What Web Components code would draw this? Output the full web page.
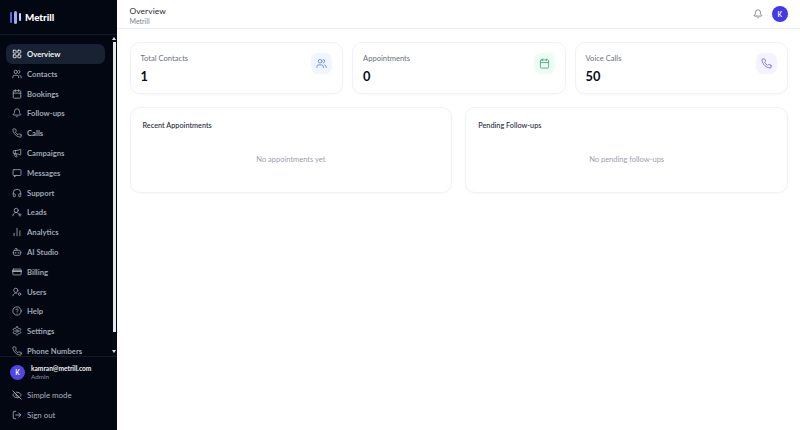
<!DOCTYPE html>
<html><head><meta charset="utf-8">
<style>
html,body{margin:0;height:100%;background:#fff;overflow:hidden}
body{font-family:Lato,"Liberation Sans",sans-serif}
</style></head><body>
<app-shell>
  <side-bar slot="side"></side-bar>
  <top-bar slot="top" heading="Overview" sub="Metrill"></top-bar>
  <stat-row slot="main">
    <stat-card label="Total Contacts" value="1" icon="users" tint="#eff6ff" ink="#5b8def"></stat-card>
    <stat-card label="Appointments" value="0" icon="calendar" tint="#ecfdf5" ink="#5aa888"></stat-card>
    <stat-card label="Voice Calls" value="50" icon="phone" tint="#f5f3ff" ink="#8b6cf0"></stat-card>
  </stat-row>
  <panel-row slot="main">
    <info-panel heading="Recent Appointments" empty="No appointments yet"></info-panel>
    <info-panel heading="Pending Follow-ups" empty="No pending follow-ups"></info-panel>
  </panel-row>
</app-shell>
<script>
const ICONS={
grid:'<rect x="3" y="3" width="7" height="7" rx="1"/><rect x="14" y="3" width="7" height="7" rx="1"/><rect x="14" y="14" width="7" height="7" rx="1"/><rect x="3" y="14" width="7" height="7" rx="1"/>',
users:'<path d="M16 21v-2a4 4 0 0 0-4-4H6a4 4 0 0 0-4 4v2"/><circle cx="9" cy="7" r="4"/><path d="M22 21v-2a4 4 0 0 0-3-3.87"/><path d="M16 3.13a4 4 0 0 1 0 7.75"/>',
calendar:'<path d="M8 2v4"/><path d="M16 2v4"/><rect x="3" y="4" width="18" height="18" rx="2"/><path d="M3 10h18"/>',
bell:'<path d="M10.27 21a2 2 0 0 0 3.46 0"/><path d="M3.26 15.33A1 1 0 0 0 4 17h16a1 1 0 0 0 .74-1.67C19.41 13.96 18 12.5 18 8A6 6 0 0 0 6 8c0 4.5-1.41 5.96-2.74 7.33"/>',
phone:'<path d="M22 16.92v3a2 2 0 0 1-2.18 2 19.79 19.79 0 0 1-8.63-3.07 19.5 19.5 0 0 1-6-6 19.79 19.79 0 0 1-3.07-8.67A2 2 0 0 1 4.11 2h3a2 2 0 0 1 2 1.72c.13.96.36 1.9.7 2.81a2 2 0 0 1-.45 2.11L8.09 9.91a16 16 0 0 0 6 6l1.27-1.27a2 2 0 0 1 2.11-.45c.91.34 1.85.57 2.81.7A2 2 0 0 1 22 16.92z"/>',
megaphone:'<path d="M11 6a13 13 0 0 0 8.4-2.8A1 1 0 0 1 21 4v12a1 1 0 0 1-1.6.8A13 13 0 0 0 11 14H5a2 2 0 0 1-2-2V8a2 2 0 0 1 2-2z"/><path d="M6 14a12 12 0 0 0 2.4 7.2 2 2 0 0 0 3.2-2.4A8 8 0 0 1 10 14"/><path d="M8 6v8"/>',
message:'<rect x="2.5" y="4" width="19" height="14" rx="2"/><path d="M6 18v3.5l4-3.5"/>',
headset:'<path d="M3 14h3a2 2 0 0 1 2 2v3a2 2 0 0 1-2 2H5a2 2 0 0 1-2-2v-7a9 9 0 0 1 18 0v7a2 2 0 0 1-2 2h-1a2 2 0 0 1-2-2v-3a2 2 0 0 1 2-2h3"/>',
userplus:'<path d="M2 21a8 8 0 0 1 13.29-6"/><circle cx="10" cy="8" r="5"/><path d="M19 16v6"/><path d="M22 19h-6"/>',
chart:'<path d="M5 21v-6"/><path d="M12 21V3"/><path d="M19 21V9"/>',
bot:'<path d="M12 8V4H8"/><rect x="4" y="8" width="16" height="12" rx="2"/><path d="M2 14h2"/><path d="M20 14h2"/><path d="M15 13v2"/><path d="M9 13v2"/>',
card:'<rect x="2" y="5" width="20" height="14" rx="2"/><path d="M2 10h20" stroke-width="4"/>',
usercog:'<circle cx="9" cy="8" r="5"/><path d="M2 21a7.5 7.5 0 0 1 9.5-6.5"/><circle cx="18" cy="17" r="3"/>',
help:'<circle cx="12" cy="12" r="10"/><path d="M9.09 9a3 3 0 0 1 5.83 1c0 2-3 3-3 3"/><path d="M12 17h.01"/>',
cog:'<path d="M12.22 2h-.44a2 2 0 0 0-2 2v.18a2 2 0 0 1-1 1.73l-.43.25a2 2 0 0 1-2 0l-.15-.08a2 2 0 0 0-2.73.73l-.22.38a2 2 0 0 0 .73 2.73l.15.1a2 2 0 0 1 1 1.72v.51a2 2 0 0 1-1 1.74l-.15.09a2 2 0 0 0-.73 2.73l.22.38a2 2 0 0 0 2.73.73l.15-.08a2 2 0 0 1 2 0l.43.25a2 2 0 0 1 1 1.73V20a2 2 0 0 0 2 2h.44a2 2 0 0 0 2-2v-.18a2 2 0 0 1 1-1.73l.43-.25a2 2 0 0 1 2 0l.15.08a2 2 0 0 0 2.73-.73l.22-.39a2 2 0 0 0-.73-2.73l-.15-.08a2 2 0 0 1-1-1.74v-.5a2 2 0 0 1 1-1.74l.15-.09a2 2 0 0 0 .73-2.73l-.22-.38a2 2 0 0 0-2.73-.73l-.15.08a2 2 0 0 1-2 0l-.43-.25a2 2 0 0 1-1-1.73V4a2 2 0 0 0-2-2z"/><circle cx="12" cy="12" r="3"/>',
eyeoff:'<path d="M10.73 5.08A11 11 0 0 1 21.9 11.6a1 1 0 0 1 0 .7 11 11 0 0 1-1.44 2.49"/><path d="M14.08 14.16a3 3 0 0 1-4.24-4.24"/><path d="M17.48 17.5A11 11 0 0 1 2.1 12.35a1 1 0 0 1 0-.7 11 11 0 0 1 4.45-5.14"/><path d="m2 2 20 20"/>',
logout:'<path d="m16 17 5-5-5-5"/><path d="M21 12H9"/><path d="M9 21H5a2 2 0 0 1-2-2V5a2 2 0 0 1 2-2h4"/>'
};
const svg=(n,s,w=2)=>`<svg xmlns="http://www.w3.org/2000/svg" width="${s}" height="${s}" viewBox="0 0 24 24" fill="none" stroke="currentColor" stroke-width="${w}" stroke-linecap="round" stroke-linejoin="round">${ICONS[n]}</svg>`;
function def(name,fn){customElements.define(name,class extends HTMLElement{connectedCallback(){if(!this.shadowRoot){this.attachShadow({mode:'open'}).innerHTML=fn(this)}}})}

def('app-shell',()=>`<style>
:host{display:flex;width:800px;height:430px;overflow:hidden}
.r{flex:1;min-width:0;display:flex;flex-direction:column}
main{display:flex;flex-direction:column;gap:13px;padding:13px 12px 0 12.5px}
</style><slot name="side"></slot><div class="r"><slot name="top"></slot><main><slot name="main"></slot></main></div>`);

def('nav-item',e=>`<style>
:host{display:flex;align-items:center;gap:5px;height:19.8px;padding-left:6px;font-size:7.7px;font-weight:700;color:#9ea6b3;border-radius:6.5px;flex:none}
:host([active]){color:#eef1f6;background:#192233}
:host([light]){font-weight:400;font-size:7.9px;color:#aab1bd}
svg{flex:none}
</style>${svg(e.getAttribute('icon'),10)}<span>${e.getAttribute('label')}</span>`);

def('brand-logo',()=>`<style>
:host{display:flex;align-items:center;gap:4px;height:35px;padding-left:10px;box-sizing:border-box;border-bottom:1px solid #131a28;color:#fff;font-size:9.8px;font-weight:900}
i{display:block;border-radius:2px}
.m{display:flex;align-items:center;gap:1.6px}
</style><span class="m"><i style="width:2.4px;height:11px;background:#5f63e8"></i><i style="width:3px;height:13px;background:#a5a6f6"></i><i style="width:2.4px;height:8px;background:#c7d2fe"></i></span><span>Metrill</span>`);

def('fake-scroll',()=>`<style>
:host{position:absolute;top:0;right:1px;bottom:0;width:4px;background:#070b14}
.t{position:absolute;top:6.5px;left:.5px;right:0;height:290.5px;background:#e6e7ea}
.a,.b{position:absolute;left:.2px;width:0;height:0;border-left:2px solid transparent;border-right:2px solid transparent}
.a{top:2px;border-bottom:3px solid #dfe1e5}.b{bottom:3px;border-top:3px solid #dfe1e5}
</style><div class="t"></div><div class="a"></div><div class="b"></div>`);

def('side-bar',()=>`<style>
:host{display:flex;flex-direction:column;width:117px;flex:none;height:430px;background:#030712;box-sizing:border-box}
.nav{position:relative;height:321px;overflow:hidden;flex:none}
.list{display:flex;flex-direction:column;padding:9.2px 12px 0 6px}
.foot{flex:1;border-top:1px solid #131a28;display:flex;flex-direction:column}
.user{display:flex;align-items:center;gap:6px;padding:6px 0 4px 10px;height:19px}
.av{width:15px;height:15px;border-radius:50%;background:#4f46e5;color:#fff;font-size:6.5px;font-weight:700;display:flex;align-items:center;justify-content:center;flex:none}
.mail{font-size:6.6px;font-weight:700;color:#eef1f6;line-height:9px}
.role{font-size:6.4px;color:#8a93a3;line-height:8px}
</style>
<brand-logo></brand-logo>
<div class="nav"><div class="list">
<nav-item active icon="grid" label="Overview"></nav-item>
<nav-item icon="users" label="Contacts"></nav-item>
<nav-item icon="calendar" label="Bookings"></nav-item>
<nav-item icon="bell" label="Follow-ups"></nav-item>
<nav-item icon="phone" label="Calls"></nav-item>
<nav-item icon="megaphone" label="Campaigns"></nav-item>
<nav-item icon="message" label="Messages"></nav-item>
<nav-item icon="headset" label="Support"></nav-item>
<nav-item icon="userplus" label="Leads"></nav-item>
<nav-item icon="chart" label="Analytics"></nav-item>
<nav-item icon="bot" label="AI Studio"></nav-item>
<nav-item icon="card" label="Billing"></nav-item>
<nav-item icon="usercog" label="Users"></nav-item>
<nav-item icon="help" label="Help"></nav-item>
<nav-item icon="cog" label="Settings"></nav-item>
<nav-item icon="phone" label="Phone Numbers"></nav-item>
</div><fake-scroll></fake-scroll></div>
<div class="foot">
<div class="user"><div class="av">K</div><div><div class="mail">kamran@metrill.com</div><div class="role">Admin</div></div></div>
<nav-item light style="margin-left:6px;margin-top:-1px" icon="eyeoff" label="Simple mode"></nav-item>
<nav-item light style="margin-left:6px" icon="logout" label="Sign out"></nav-item>
</div>`);

def('top-bar',e=>`<style>
:host{display:flex;align-items:center;justify-content:space-between;height:29px;box-sizing:border-box;border-bottom:1px solid #e8ecf3;padding:2px 12px 0 12.5px;background:#fff}
.h{font-size:8.4px;font-weight:400;color:#1f2937;line-height:12px;letter-spacing:.1px}
.s{font-size:7px;color:#7b8494;line-height:9px}
.r{display:flex;align-items:center;gap:9px;color:#6b7280;margin-top:-2px}
.av{width:16.5px;height:16.5px;border-radius:50%;background:#4338ea;color:#fff;font-size:6.5px;font-weight:700;display:flex;align-items:center;justify-content:center}
</style><div><div class="h">${e.getAttribute('heading')}</div><div class="s">${e.getAttribute('sub')}</div></div>
<div class="r">${svg('bell',10)}<div class="av">K</div></div>`);

def('stat-row',()=>`<style>:host{display:grid;grid-template-columns:repeat(3,1fr);gap:9px}</style><slot></slot>`);
def('panel-row',()=>`<style>:host{display:grid;grid-template-columns:repeat(2,1fr);gap:13px}</style><slot></slot>`);

def('stat-card',e=>`<style>
:host{display:flex;align-items:flex-start;justify-content:space-between;height:52px;box-sizing:border-box;padding:10px 10px 0 10px;background:#fff;border:1px solid #f0f2f7;border-radius:10px;box-shadow:0 1px 2px rgba(15,23,42,.03)}
.l{font-size:7.6px;color:#6b7280;line-height:11px;margin-bottom:5px}
.v{font-size:12.8px;font-weight:700;color:#0b0f19;line-height:15px}
.i{width:21px;height:21px;border-radius:6.5px;display:flex;align-items:center;justify-content:center;background:${e.getAttribute('tint')};color:${e.getAttribute('ink')}}
</style><div><div class="l">${e.getAttribute('label')}</div><div class="v">${e.getAttribute('value')}</div></div><div class="i">${svg(e.getAttribute('icon'),11)}</div>`);

def('info-panel',e=>`<style>
:host{display:block;height:86px;box-sizing:border-box;padding:12px 12px;background:#fff;border:1px solid #f0f2f7;border-radius:10px;box-shadow:0 1px 2px rgba(15,23,42,.03)}
.t{font-size:7.3px;font-weight:500;color:#1f2937;line-height:11px}
.e{font-size:7.5px;color:#9aa2ae;text-align:center;margin-top:23px;line-height:11px}
</style><div class="t">${e.getAttribute('heading')}</div><div class="e">${e.getAttribute('empty')}</div>`);
</script></body></html>
